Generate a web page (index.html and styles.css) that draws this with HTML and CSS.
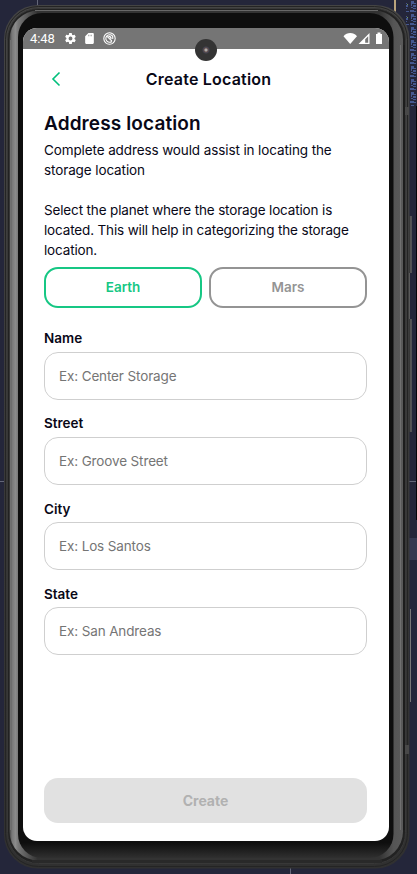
FILE: index.html
```html
<!DOCTYPE html>
<html lang="en">
<head>
<meta charset="utf-8">
<title>Create Location</title>
<link rel="stylesheet" href="styles.css">
</head>
<body>
<svg class="device" viewBox="0 0 417 874" aria-hidden="true">
  <defs>
    <linearGradient id="side" gradientUnits="userSpaceOnUse" x1="10" x2="403" y1="0" y2="0">
      <stop offset="0" stop-color="#4c4c4c"/><stop offset=".005" stop-color="#777"/><stop offset=".014" stop-color="#8b8b8b"/><stop offset=".021" stop-color="#777"/><stop offset=".07" stop-color="#333"/>
      <stop offset=".94" stop-color="#333"/><stop offset=".976" stop-color="#555"/><stop offset="1" stop-color="#5a5a5a"/>
    </linearGradient>
    <linearGradient id="rim" x1="0" x2="0" y1="0" y2="1">
      <stop offset="0" stop-color="#444"/><stop offset=".5" stop-color="#3a3a3a"/><stop offset="1" stop-color="#303030"/>
    </linearGradient>
    <linearGradient id="lower" x1="0" x2="0" y1="0" y2="1">
      <stop offset="0" stop-color="#0e0e0e"/><stop offset=".982" stop-color="#0e0e0e"/><stop offset="1" stop-color="#303030"/>
    </linearGradient>
    <pattern id="code" width="10" height="13" patternUnits="userSpaceOnUse">
      <path d="M1 1h3v2h3v1H2v2H1zM3 5h5v2H1v1h6v1H3zM0 10h4v1h5v1H0z" fill="#45588f"/><path d="M7 4h1v1H7z" fill="#6d9560"/>
    </pattern>
  </defs>
  <path d="M37.500 0v6M290.500 866v8" stroke="#646779" fill="none"/>
  <path d="M0 481.500h5M409 481.500h8" stroke="#646779"/>
  <path d="M395 0v12" stroke="#b9a37c" stroke-width="2"/>
  <path d="M406 0h10v106h-10z" fill="url(#code)"/>
  <path d="M416 106h1v414h-1z" fill="#050509"/>
  <path d="M409 538h8v22h-8z" fill="#353951"/>
  <path d="M409 216h2.500v57H409zM409 319h2.500v113H409z" fill="#333"/>
  <path d="M411 216v57M409.500 273v46M411 319v113M410.500 609v93" stroke="#777" fill="none"/>
  <rect x="4" y="5" width="405.500" height="863.500" rx="34" fill="url(#rim)"/>
  <rect x="5.500" y="6.500" width="402" height="860" rx="33" fill="none" stroke="#242424"/>
  <rect x="7.500" y="8.500" width="398" height="855" rx="31" fill="#222" stroke="#383838"/>
  <rect x="9.500" y="10.500" width="393.500" height="850" rx="29" fill="url(#side)"/>
  <path d="M35 10.500h343" stroke="#686868"/>
  <path d="M32 861.500h350" stroke="#292929" stroke-width="3"/>
  <path d="M10.500 40v790M400.500 45v785" stroke="#707070"/>
  <path d="M404 45v785" stroke="#1d1d1d" stroke-width="2"/>
  <rect x="18" y="13" width="375.500" height="845" rx="24" fill="url(#lower)"/>
  <path d="M405 107h4v8h-4zM405 745h4v9h-4z" fill="#484848"/>
</svg>
<div class="screen">
  <div class="status">
    <span class="clock">4:48</span>
    <svg class="gear" viewBox="0 0 24 24"><path fill-rule="evenodd" d="M19.400 13a7.500 7.500 0 0 0 0-2l2.100-1.600a.5.5 0 0 0 .1-.7l-2-3.400a.5.5 0 0 0-.6-.2l-2.500 1a7.300 7.300 0 0 0-1.700-1L14.400 2.400a.5.5 0 0 0-.5-.4h-4a.5.5 0 0 0-.5.4L9 5.100a7.700 7.700 0 0 0-1.700 1l-2.400-1a.5.5 0 0 0-.6.2l-2 3.400a.5.5 0 0 0 .1.700L4.500 11a8 8 0 0 0 0 2l-2.100 1.600a.5.500 0 0 0-.1.700l2 3.400c.1.200.4.300.6.200l2.500-1a7 7 0 0 0 1.700 1l.4 2.700c0 .2.200.4.500.4h4c.2 0 .4-.2.500-.4l.4-2.700a7 7 0 0 0 1.700-1l2.400 1c.2.100.5 0 .6-.2l2-3.400a.5.5 0 0 0-.1-.7zM12 15.600a3.600 3.600 0 1 1 0-7.200 3.600 3.600 0 0 1 0 7.200z"/></svg>
    <svg class="card" viewBox="0 0 24 24"><path fill-rule="evenodd" d="M18 2h-8L4 8v12c0 1.100.9 2 2 2h12c1.100 0 2-.9 2-2V4c0-1.100-.9-2-2-2zM9.500 5h1v3h-1zm3 0h1v3h-1zm3 0h1v3h-1z"/></svg>
    <svg class="debug" viewBox="0 0 24 24"><g fill="none" stroke="#fff" stroke-width="2"><circle cx="12" cy="12" r="10.500"/><path d="M16.500 17.500a7 7 0 1 1 1.500-9.500v5M7.500 8l9 9"/><path d="M10 8.500a3.500 3.500 0 0 1 4.500 4.500" stroke-width="2.500"/></g></svg>
    <svg class="signals" viewBox="0 0 40 14"><path d="M.5 4.200C4-.2 10.500-.2 14 4.200L7.200 12z"/><path fill-rule="evenodd" d="M26.500 1v11H15.500zM25.200 4.200l-3 3v3.600h3z"/><path d="M33 2h1.500V.5h3V2H39v10h-6z"/></svg>
  </div>
  <div class="camera"></div>
  <header class="bar">
    <svg class="back" viewBox="0 0 10 16"><path d="M8.500 1.500 2 8l6.500 6.500"/></svg>
    <h1>Create Location</h1>
  </header>
  <main>
    <h2>Address location</h2>
    <p class="intro">Complete address would assist in locating the<br>storage location</p>
    <p class="planet">Select the planet where the storage location is<br>located. This will help in categorizing the storage<br>location.</p>
    <div class="choices"><button class="choice active">Earth</button><button class="choice">Mars</button></div>
    <form>
      <label>Name<input placeholder="Ex: Center Storage"></label>
      <label>Street<input placeholder="Ex: Groove Street"></label>
      <label>City<input placeholder="Ex: Los Santos"></label>
      <label>State<input placeholder="Ex: San Andreas"></label>
    </form>
    <button class="create" disabled>Create</button>
  </main>
</div>
</body>
</html>
```
FILE: styles.css
```css
* { box-sizing: border-box; }
body { margin: 0; width: 417px; height: 874px; padding: 28px 28px 33px 23px; overflow: hidden; background: #24263a; font-family: Inter, "Liberation Sans", sans-serif; color: #090817; }
.device { position: absolute; left: 0; top: 0; width: 417px; height: 874px; }
.screen { position: relative; width: 366px; height: 813px; border-radius: 14px; overflow: hidden; background: #fff; display: flex; flex-direction: column; }
.status { height: 21px; flex: none; background: #757575; display: flex; align-items: center; padding: 0 6.5px 0 7px; color: #fff; }
.status svg { fill: #fff; flex: none; }
.clock { font: 13px/21px Roboto, sans-serif; width: 34px; letter-spacing: -.1px; }
.gear { width: 13px; height: 13px; }
.card { width: 13px; height: 13px; margin-left: 6px; }
.debug { width: 13px; height: 13px; margin-left: 7px; }
.signals { width: 40px; height: 14px; margin-left: auto; }
.camera { position: absolute; left: 172px; top: 11px; width: 22px; height: 22px; border-radius: 50%; background: radial-gradient(circle, #aaa 0 1px, #66504c 2px, #444452 3px, #343434 4px 100%); }
.bar { height: 60px; flex: none; display: grid; place-items: center; position: relative; }
.back { position: absolute; left: 28px; top: 22px; width: 10px; height: 16px; fill: none; stroke: #00bf7b; stroke-width: 1.6; }
h1, h2, p { margin: 0; }
h1 { font-size: 16px; line-height: 22px; font-weight: 600; letter-spacing: .2px; padding-left: 5px; }
main { flex: 1; display: flex; flex-direction: column; padding: 0 22px 18px 21px; }
h2 { font-size: 19px; line-height: 26px; font-weight: 600; letter-spacing: .12px; margin-top: 2px; white-space: nowrap; }
p { font-size: 13.5px; line-height: 19.7px; letter-spacing: -.13px; white-space: nowrap; }
.intro { margin-top: 4px; letter-spacing: -.11px; }
.planet { margin-top: 21px; letter-spacing: -.15px; }
.choices { display: flex; gap: 7px; margin-top: 6px; }
.choice { flex: 1; height: 41px; border: 2px solid #949494; border-radius: 14px; background: #fff; color: #949494; font: 600 13.5px Inter, sans-serif; padding: 0; }
.active { border-color: #16c784; color: #16c784; }
form { display: flex; flex-direction: column; gap: 13.8px; margin-top: 20.5px; }
label { display: block; font-size: 13.5px; line-height: 20px; font-weight: 600; }
input { display: block; width: 100%; height: 48px; margin-top: 3.5px; border: 1px solid #cfcfcf; border-radius: 14px; padding: 0 14px; background: #fff; font: 13.5px Inter, sans-serif; letter-spacing: -.13px; }
input::placeholder { color: #757575; opacity: 1; }
.create { margin-top: auto; height: 45px; flex: none; border: 0; border-radius: 14px; background: #e1e1e1; color: #b1b1b1; font: 700 14px Inter, sans-serif; }
```
